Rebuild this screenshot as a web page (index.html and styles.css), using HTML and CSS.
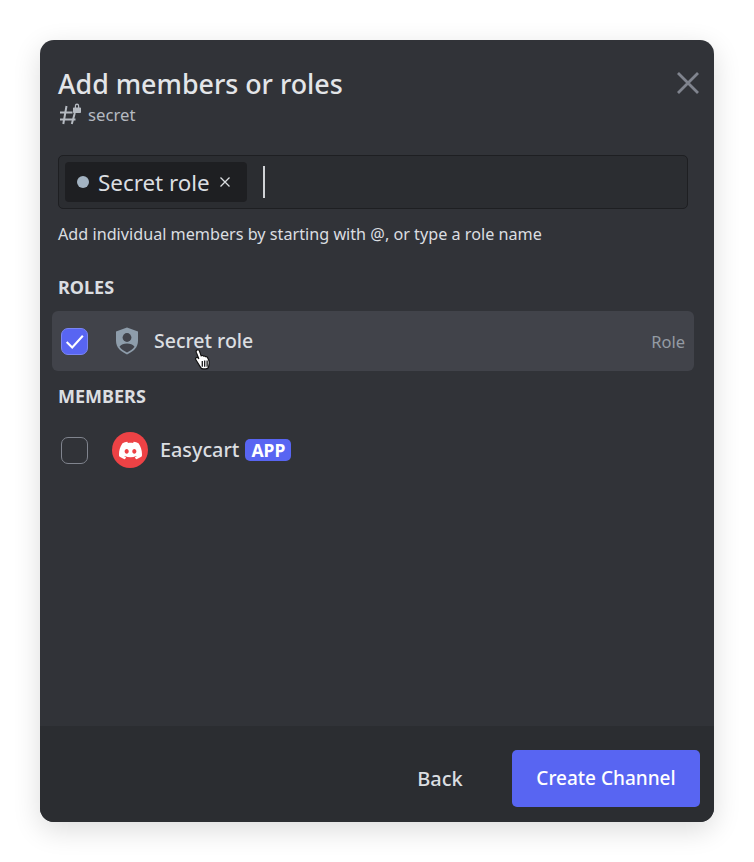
FILE: index.html
```html
<!DOCTYPE html>
<html lang="en">
<head>
<meta charset="utf-8">
<title>Add members or roles</title>
<link rel="stylesheet" href="styles.css">
</head>
<body>
<div class="modal">
  <div class="content">
    <header class="head">
      <h1 class="title">Add members or roles</h1>
      <svg class="close" viewBox="0 0 24 24"><path d="M2 2 22 22M22 2 2 22"/></svg>
      <div class="sub">
        <svg class="hash" viewBox="0 0 24 22"><path class="hs" d="M8.500 2 5.300 20M16.800 9 13.800 20M2 8.500H14.500M2 15.500H17.500"/><path class="lk" d="M15.800 3.500h6.400a.8.8 0 0 1 .8.8v3.900a.8.8 0 0 1-.8.8h-6.400a.8.8 0 0 1-.8-.8V4.300a.8.8 0 0 1 .8-.8ZM16.800 3.500V1.800a2.200 2.200 0 0 1 4.400 0V3.500h-1.200V1.900a1 1 0 0 0-2 0V3.500Z"/></svg>
        <span>secret</span>
      </div>
    </header>
    <div class="field">
      <div class="chip">
        <span class="dot"></span><span class="chip-text">Secret role</span>
        <svg class="chip-x" viewBox="0 0 12 12"><path d="M1.500 1.500 10.500 10.500M10.500 1.500 1.500 10.500"/></svg>
      </div>
      <span class="caret"></span>
    </div>
    <p class="hint">Add individual members by starting with @, or type a role name</p>
    <h2 class="section roles-h">ROLES</h2>
    <div class="row selected">
      <span class="check on"><svg viewBox="0 0 24 24"><path d="M4.500 12.500 9.800 17.800 20 6.500"/></svg></span>
      <svg class="shield" viewBox="0 0 24 28"><path d="M12 .6 23 4.500V14c0 6.500-5 10.800-11 13.400C6 24.800 1 20.500 1 14V4.500Z" fill="#8e9dab"/><circle cx="12" cy="10.500" r="4.400" fill="#41434b"/><path d="M4.500 19.800C6 17.300 9 16.600 12 16.600s6 .7 7.500 3.200C17.800 22.300 15 24 12 25.400 9 24 6.200 22.300 4.500 19.800Z" fill="#41434b"/></svg>
      <span class="name role-name">Secret role</span>
      <span class="tag">Role</span>
      <svg class="cursor" viewBox="0 0 15 20"><path d="M2.600.8c.9-.3 1.700.2 2 1.100l1.600 4.600.6-.2c.8-.2 1.400 0 1.800.5.600-.2 1.300 0 1.700.5.700-.2 1.400 0 1.800.6l1.300 2.600c.5 1.200.6 2.500.4 3.700l-.4 2.400c-.2 1.400-1.400 2.400-2.800 2.400H8.200c-1 0-1.900-.5-2.400-1.300L1.200 10.300c-.5-.8-.3-1.600.3-2 .7-.4 1.500-.2 2 .4l.6.7L1.500 3c-.3-1 .2-1.900 1.100-2.200Z" fill="#fff" stroke="#111" stroke-width="1.100"/><path d="M7.300 11.500v5.500M9.600 11v6M11.900 11v6" stroke="#111" stroke-width="1.200"/></svg>
    </div>
    <h2 class="section members-h">MEMBERS</h2>
    <div class="row member">
      <span class="check"></span>
      <span class="avatar"><svg viewBox="0 0 24 24"><path d="M20.317 4.370a19.791 19.791 0 0 0-4.885-1.515.074.074 0 0 0-.079.037c-.211.375-.445.865-.608 1.250-1.845-.276-3.680-.276-5.487 0-.164-.393-.406-.874-.618-1.250a.077.077 0 0 0-.079-.037 19.736 19.736 0 0 0-4.885 1.515.070.070 0 0 0-.032.028C.533 9.046-.319 13.580.099 18.058a.082.082 0 0 0 .031.056c2.053 1.508 4.041 2.423 5.993 3.029a.078.078 0 0 0 .084-.028c.462-.630.873-1.295 1.226-1.994a.076.076 0 0 0-.042-.106c-.653-.248-1.274-.549-1.872-.892a.077.077 0 0 1-.008-.128c.126-.094.252-.192.372-.291a.074.074 0 0 1 .078-.011c3.928 1.793 8.180 1.793 12.061 0a.074.074 0 0 1 .079.010c.120.099.246.198.373.292a.077.077 0 0 1-.007.128 12.299 12.299 0 0 1-1.873.891.077.077 0 0 0-.041.107c.360.698.772 1.363 1.225 1.993a.076.076 0 0 0 .084.029c1.961-.607 3.950-1.522 6.002-3.029a.077.077 0 0 0 .031-.055c.500-5.177-.838-9.674-3.548-13.660a.061.061 0 0 0-.031-.029ZM8.020 15.331c-1.183 0-2.157-1.086-2.157-2.419 0-1.333.956-2.419 2.157-2.419 1.211 0 2.176 1.095 2.157 2.419 0 1.333-.956 2.419-2.157 2.419Zm7.975 0c-1.183 0-2.157-1.086-2.157-2.419 0-1.333.955-2.419 2.157-2.419 1.211 0 2.176 1.095 2.157 2.419 0 1.333-.946 2.419-2.157 2.419Z" fill="#fff"/></svg></span>
      <span class="name member-name">Easycart</span>
      <span class="app">APP</span>
    </div>
  </div>
  <footer class="foot">
    <button class="back">Back</button>
    <button class="create">Create Channel</button>
  </footer>
</div>
</body>
</html>
```
FILE: styles.css
```css
* { box-sizing: border-box; }
html, body { margin: 0; background: #fff; }
body { padding: 40px; height: 862px; overflow: hidden; font-family: "Noto Sans", sans-serif; }
.modal {
  width: 674px;
  height: 782px;
  background: #313338;
  border-radius: 14px;
  display: flex;
  flex-direction: column;
  overflow: hidden;
  box-shadow: 0 8px 28px rgba(0, 0, 0, .14);
}
.content { flex: 1; padding: 26px 26px 0 18px; position: relative; }
.head { position: relative; height: 89px; }
.title { margin: 0; font-size: 26.800px; line-height: 36px; font-weight: 500; color: #e3e5e8; }
.close { position: absolute; right: -12px; top: 5px; width: 24px; height: 24px; }
.close path { stroke: #80848e; stroke-width: 2.800; fill: none; }
.sub { display: flex; align-items: center; gap: 6px; height: 22px; margin-top: 2px; color: #b5bac1; font-size: 16.700px; line-height: 22px; }
.hash { width: 24px; height: 22px; overflow: visible; }
.hs { stroke: #b5bac1; stroke-width: 2; fill: none; }
.lk { fill: #b5bac1; }
.field {
  height: 54px;
  background: #2b2d31;
  border: 1px solid #1e1f22;
  border-radius: 5px;
  padding: 6px;
  display: flex;
  align-items: center;
  gap: 16px;
}
.chip {
  height: 40px;
  width: 182px;
  background: #1e1f22;
  border-radius: 4px;
  padding: 0 15px 0 12px;
  display: flex;
  align-items: center;
}
.dot { width: 12px; height: 12px; border-radius: 50%; background: #a3b3c2; margin-right: 9px; }
.chip-text { font-size: 22.400px; line-height: 30px; padding-top: 2px; color: #dbdee1; white-space: nowrap; }
.chip-x { width: 12px; height: 12px; margin-left: 9px; flex: none; }
.chip-x path { stroke: #dbdee1; stroke-width: 1.300; fill: none; }
.caret { width: 1.500px; height: 32px; background: #d0d2d5; }
.hint { margin: 13px 0 0; font-size: 16.200px; line-height: 24px; color: #dbdee1; }
.section { margin: 0; font-size: 18px; line-height: 20px; font-weight: 700; color: #dbdee1; }
.roles-h { margin-top: 31px; }
.members-h { margin-top: 15px; }
.row { display: flex; align-items: center; position: relative; height: 60px; margin: 0 -6px; padding: 0 9px; border-radius: 6px; }
.selected { background: #41434a; margin-top: 14px; }
.member { margin-top: 14px; height: 60px; }
.check { width: 27px; height: 27px; border-radius: 7px; border: 1.500px solid #80848e; flex: none; display: block; }
.check.on { background: #5865f2; border-color: #7a85f4; }
.check svg { display: block; width: 100%; height: 100%; }
.check path { fill: none; stroke: #fff; stroke-width: 2; }
.shield { width: 24px; height: 28px; margin-left: 27px; flex: none; }
.name { font-size: 19.500px; line-height: 26px; font-weight: 500; color: #dbdee1; }
.role-name { margin-left: 15px; }
.tag { margin-left: auto; font-size: 16.500px; color: #949ba4; }
.cursor { position: absolute; left: 142px; top: 38px; width: 17px; height: 21px; }
.avatar { width: 36px; height: 36px; margin-left: 24px; border-radius: 50%; background: #ed4245; display: flex; align-items: center; justify-content: center; flex: none; }
.avatar svg { width: 23px; height: 23px; }
.member-name { margin-left: 12px; font-size: 19.800px; }
.app { margin-left: 6px; height: 22px; width: 46px; border-radius: 5px; background: #5865f2; color: #fff; font-size: 17.500px; line-height: 22px; font-weight: 700; text-align: center; }
.foot { height: 96px; background: #2b2d31; display: flex; align-items: center; justify-content: flex-end; padding: 8px 14px 0 0; flex: none; }
.foot button { font-family: inherit; font-size: 19px; font-weight: 500; border: 0; cursor: pointer; }
.foot .back { background: none; color: #dbdee1; width: 144px; height: 57px; padding: 0; font-size: 20px; }
.create { background: #5865f2; color: #fff; width: 188px; height: 57px; border-radius: 5px; padding: 0; }
```
